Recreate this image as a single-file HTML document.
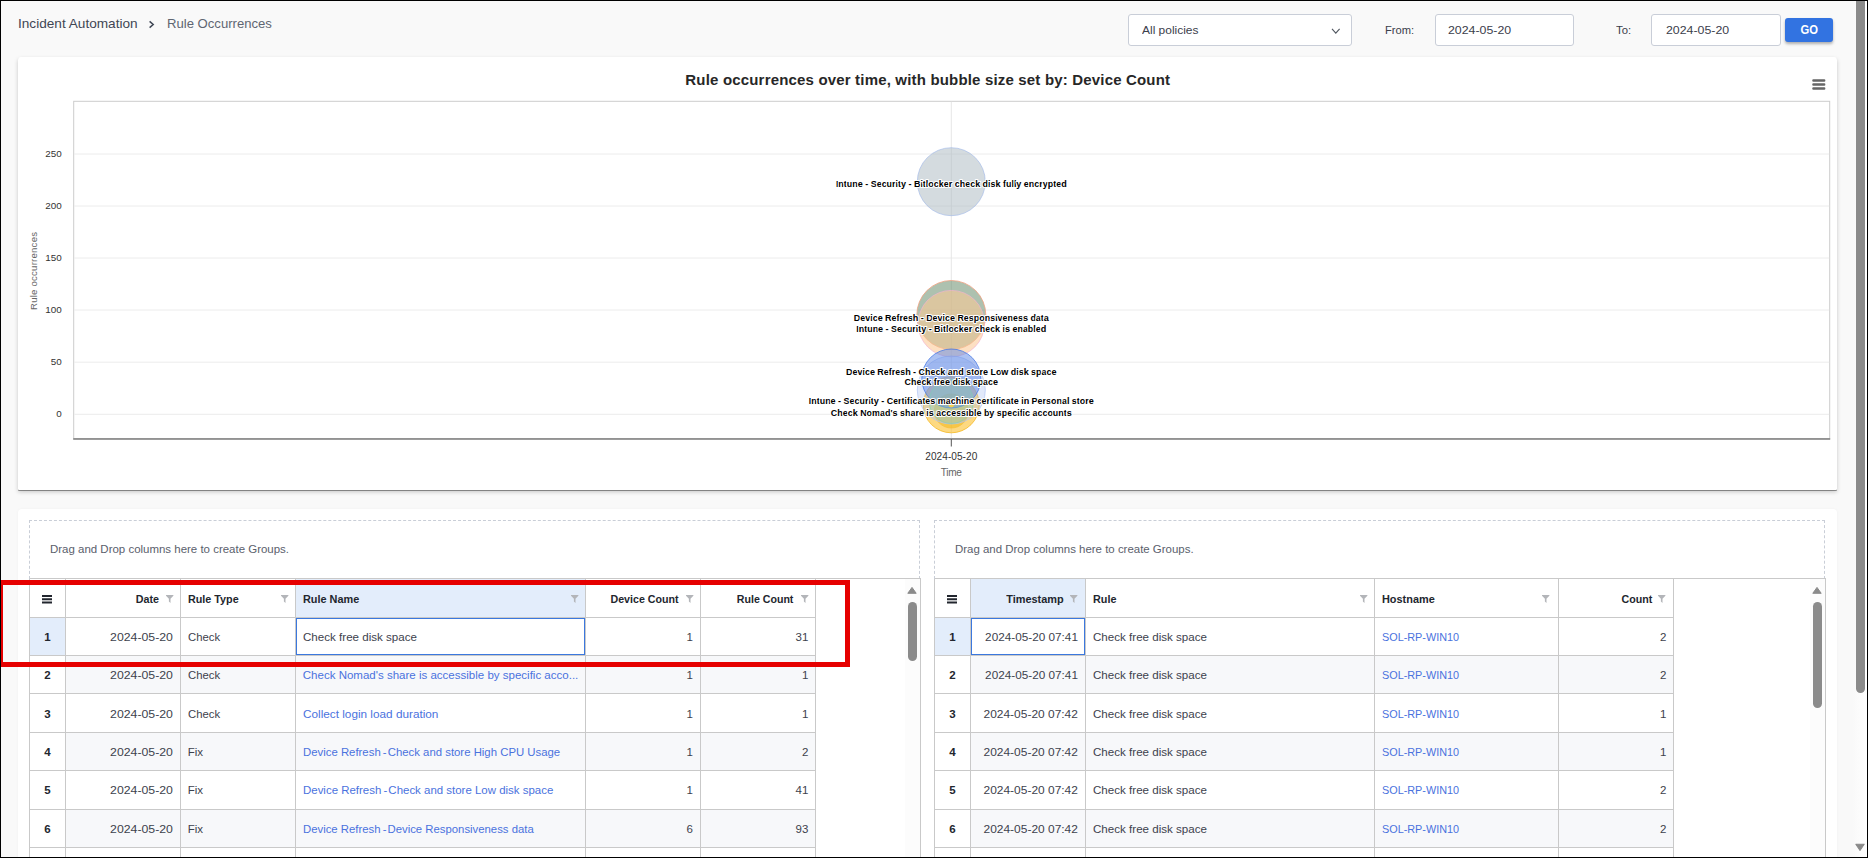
<!DOCTYPE html>
<html lang="en"><head><meta charset="utf-8"><title>Rule Occurrences</title>
<style>
html,body{margin:0;padding:0}
body{width:1868px;height:858px;overflow:hidden;position:relative;background:#f9f9f9;font-family:"Liberation Sans",sans-serif}
.t{position:absolute;white-space:nowrap;line-height:1}
.a{position:absolute}
.box{position:absolute;box-sizing:border-box;background:#fff;border:1px solid #c9ced8;border-radius:3px}
.vl{position:absolute;width:1px;background:#c9c9c9}
.hl{position:absolute;height:1px;background:#c9c9c9}
svg{position:absolute;overflow:visible}
</style></head>
<body>
<div class="a" style="left:18px;top:57px;width:1819px;height:433px;background:#fff;border-radius:3px 3px 1px 1px;box-shadow:0 1px 0.5px rgba(0,0,0,.38),0 2px 4px rgba(0,0,0,.2)"></div>
<div class="a" style="left:18px;top:509px;width:1819px;height:360px;background:#fff;border-radius:4px;box-shadow:0 0 3px rgba(0,0,0,.04)"></div>
<div class="box" style="left:1128.2px;top:14.4px;width:223.5px;height:31.2px"></div>
<svg style="left:1331px;top:27px" width="10" height="8" viewBox="0 0 10 8"><path d="M1 1.8 L4.8 6.2 L8.6 1.8" fill="none" stroke="#50565f" stroke-width="1.1"/></svg>
<div class="box" style="left:1435.3px;top:14.4px;width:138.5px;height:31.2px"></div>
<div class="box" style="left:1651.3px;top:14.4px;width:129.4px;height:31.2px"></div>
<div class="a" style="left:1785.1px;top:18px;width:47.9px;height:23.5px;background:#3273e1;border-radius:3px;box-shadow:0 2px 3px rgba(0,0,0,.3)"></div>
<svg style="left:148px;top:20px" width="8" height="9" viewBox="0 0 8 9"><path d="M1.6 1.4 L5.2 4.5 L1.6 7.6" fill="none" stroke="#3f4654" stroke-width="1.5"/></svg>
<div class="a" style="left:29.1px;top:520px;width:891.0px;height:59px;box-sizing:border-box;border:1px dashed #c9ced7;border-bottom:none"></div>
<div class="a" style="left:65.4px;top:655.56px;width:750.3px;height:38.36px;background:#f7f8fa"></div>
<div class="a" style="left:65.4px;top:732.28px;width:750.3px;height:38.36px;background:#f7f8fa"></div>
<div class="a" style="left:65.4px;top:809.00px;width:750.3px;height:38.36px;background:#f7f8fa"></div>
<div class="a" style="left:295.6px;top:578.5px;width:289.8px;height:38.7px;background:#e3edfb"></div>
<div class="a" style="left:29.6px;top:617.2px;width:35.8px;height:38.36px;background:#e3edfb"></div>
<div class="hl" style="left:29.6px;top:578.0px;width:891.0px"></div>
<div class="vl" style="left:29.1px;top:578.5px;height:300px"></div>
<div class="vl" style="left:920.1px;top:578.5px;height:300px"></div>
<div class="hl" style="left:29.6px;top:616.70px;width:786.1px"></div>
<div class="hl" style="left:29.6px;top:655.06px;width:786.1px"></div>
<div class="hl" style="left:29.6px;top:693.42px;width:786.1px"></div>
<div class="hl" style="left:29.6px;top:731.78px;width:786.1px"></div>
<div class="hl" style="left:29.6px;top:770.14px;width:786.1px"></div>
<div class="hl" style="left:29.6px;top:808.50px;width:786.1px"></div>
<div class="hl" style="left:29.6px;top:846.86px;width:786.1px"></div>
<div class="vl" style="left:64.9px;top:578.5px;height:300px"></div>
<div class="vl" style="left:179.9px;top:578.5px;height:300px"></div>
<div class="vl" style="left:295.1px;top:578.5px;height:300px"></div>
<div class="vl" style="left:584.9px;top:578.5px;height:300px"></div>
<div class="vl" style="left:699.8px;top:578.5px;height:300px"></div>
<div class="vl" style="left:815.2px;top:578.5px;height:300px"></div>
<div class="a" style="left:296.1px;top:618.0px;width:288.8px;height:36.76px;box-sizing:border-box;border:1.5px solid #3b78de;background:#fff"></div>
<div class="a" style="left:904.6px;top:579.0px;width:15.5px;height:300px;background:#fcfcfc"></div>
<svg style="left:907.2px;top:586px" width="10" height="9" viewBox="0 0 10 9"><path d="M0.8 7.3 L5 1.4 L9.2 7.3 Z" fill="#8a8a8a" stroke="#8a8a8a" stroke-width="1" stroke-linejoin="round"/></svg>
<div class="a" style="left:908.1px;top:602px;width:9px;height:58.8px;background:#8b8b8b;border-radius:4.5px"></div>
<div class="a" style="left:934.1px;top:520px;width:891.0px;height:59px;box-sizing:border-box;border:1px dashed #c9ced7;border-bottom:none"></div>
<div class="a" style="left:970.6px;top:655.56px;width:702.7px;height:38.36px;background:#f7f8fa"></div>
<div class="a" style="left:970.6px;top:732.28px;width:702.7px;height:38.36px;background:#f7f8fa"></div>
<div class="a" style="left:970.6px;top:809.00px;width:702.7px;height:38.36px;background:#f7f8fa"></div>
<div class="a" style="left:970.6px;top:578.5px;width:114.9px;height:38.7px;background:#e3edfb"></div>
<div class="a" style="left:934.6px;top:617.2px;width:36.0px;height:38.36px;background:#e3edfb"></div>
<div class="hl" style="left:934.6px;top:578.0px;width:891.0px"></div>
<div class="vl" style="left:934.1px;top:578.5px;height:300px"></div>
<div class="vl" style="left:1825.1px;top:578.5px;height:300px"></div>
<div class="hl" style="left:934.6px;top:616.70px;width:738.7px"></div>
<div class="hl" style="left:934.6px;top:655.06px;width:738.7px"></div>
<div class="hl" style="left:934.6px;top:693.42px;width:738.7px"></div>
<div class="hl" style="left:934.6px;top:731.78px;width:738.7px"></div>
<div class="hl" style="left:934.6px;top:770.14px;width:738.7px"></div>
<div class="hl" style="left:934.6px;top:808.50px;width:738.7px"></div>
<div class="hl" style="left:934.6px;top:846.86px;width:738.7px"></div>
<div class="vl" style="left:970.1px;top:578.5px;height:300px"></div>
<div class="vl" style="left:1085.0px;top:578.5px;height:300px"></div>
<div class="vl" style="left:1374.0px;top:578.5px;height:300px"></div>
<div class="vl" style="left:1558.0px;top:578.5px;height:300px"></div>
<div class="vl" style="left:1672.8px;top:578.5px;height:300px"></div>
<div class="a" style="left:971.1px;top:618.0px;width:113.9px;height:36.76px;box-sizing:border-box;border:1.5px solid #3b78de;background:#fff"></div>
<div class="a" style="left:1809.6px;top:579.0px;width:15.5px;height:300px;background:#fcfcfc"></div>
<svg style="left:1812.2px;top:586px" width="10" height="9" viewBox="0 0 10 9"><path d="M0.8 7.3 L5 1.4 L9.2 7.3 Z" fill="#8a8a8a" stroke="#8a8a8a" stroke-width="1" stroke-linejoin="round"/></svg>
<div class="a" style="left:1813.1px;top:602px;width:9px;height:106.0px;background:#8b8b8b;border-radius:4.5px"></div>
<svg style="left:0;top:0" width="1868" height="520" viewBox="0 0 1868 520" font-family='"Liberation Sans", sans-serif'>
<rect x="73.7" y="101.3" width="1756" height="337.3" fill="none" stroke="#cccccc" stroke-width="1"/>
<path d="M74.2 154H1829.2" stroke="#ececec" stroke-width="1"/>
<path d="M74.2 206H1829.2" stroke="#ececec" stroke-width="1"/>
<path d="M74.2 258H1829.2" stroke="#ececec" stroke-width="1"/>
<path d="M74.2 310H1829.2" stroke="#ececec" stroke-width="1"/>
<path d="M74.2 362.2H1829.2" stroke="#ececec" stroke-width="1"/>
<path d="M74.2 414.3H1829.2" stroke="#ececec" stroke-width="1"/>
<path d="M951.3 101.8V438" stroke="#e6e6e6" stroke-width="1"/>
<circle cx="951.3" cy="181.7" r="34" fill="#a9b7bf" fill-opacity="0.5" stroke="#9db5e8" stroke-opacity="0.6" stroke-width="1"/>
<circle cx="951.3" cy="315" r="34.5" fill="#5c8460" fill-opacity="0.5" stroke="#f0a080" stroke-opacity="0.8" stroke-width="1"/>
<circle cx="951.3" cy="323.6" r="33.2" fill="#fcca96" fill-opacity="0.58" stroke="#f3b4cc" stroke-opacity="0.7" stroke-width="1"/>
<circle cx="951.3" cy="404.8" r="28" fill="#fbc02d" fill-opacity="0.6" stroke="#f5b820" stroke-opacity="0.8" stroke-width="1"/>
<circle cx="951.3" cy="411" r="17" fill="#f0b000" fill-opacity="0.45" stroke="#f5c040" stroke-opacity="0.8" stroke-width="1"/>
<circle cx="951.3" cy="390" r="34" fill="#a8c0f0" fill-opacity="0.35" stroke="#b0c4f4" stroke-opacity="0.7" stroke-width="1"/>
<circle cx="951.3" cy="378.5" r="29.5" fill="#5b86e5" fill-opacity="0.5" stroke="#4a7ce6" stroke-opacity="0.8" stroke-width="1"/>
<circle cx="951.3" cy="401.5" r="22" fill="#7fd0c0" fill-opacity="0.3" stroke="#7cd0b8" stroke-opacity="0.6" stroke-width="1"/>
<circle cx="951.3" cy="404.5" r="2.6" fill="#fbd34a" fill-opacity="0.9" stroke="#fbd34a" stroke-opacity="0.6" stroke-width="1"/>
<path d="M73.2 438.9H1830.2" stroke="#7d7d7d" stroke-width="1.5"/>
<path d="M951.3 439V446.5" stroke="#555" stroke-width="1"/>
<text x="61.8" y="156.8" text-anchor="end" font-size="9.9" fill="#333">250</text>
<text x="61.8" y="208.8" text-anchor="end" font-size="9.9" fill="#333">200</text>
<text x="61.8" y="260.8" text-anchor="end" font-size="9.9" fill="#333">150</text>
<text x="61.8" y="312.8" text-anchor="end" font-size="9.9" fill="#333">100</text>
<text x="61.8" y="365.0" text-anchor="end" font-size="9.9" fill="#333">50</text>
<text x="61.8" y="417.1" text-anchor="end" font-size="9.9" fill="#333">0</text>
<text transform="translate(36.7 271) rotate(-90)" text-anchor="middle" font-size="9.6" fill="#666" textLength="78" lengthAdjust="spacing">Rule occurrences</text>
<text x="951.3" y="460" text-anchor="middle" font-size="10.1" fill="#333" textLength="52" lengthAdjust="spacing">2024-05-20</text>
<text x="951.3" y="475.7" text-anchor="middle" font-size="10.1" fill="#666" textLength="21.2" lengthAdjust="spacing">Time</text>
<text x="927.7" y="85" text-anchor="middle" font-size="15" font-weight="700" fill="#272727" textLength="484.7" lengthAdjust="spacing">Rule occurrences over time, with bubble size set by: Device Count</text>
<text x="951.3" y="186.9" text-anchor="middle" font-size="9.05" font-weight="700" fill="#000" stroke="#fff" stroke-width="2" stroke-linejoin="round" paint-order="stroke" textLength="230.8" lengthAdjust="spacing">Intune - Security - Bitlocker check disk fully encrypted</text>
<text x="951.3" y="321" text-anchor="middle" font-size="9.05" font-weight="700" fill="#000" stroke="#fff" stroke-width="2" stroke-linejoin="round" paint-order="stroke" textLength="195" lengthAdjust="spacing">Device Refresh - Device Responsiveness data</text>
<text x="951.3" y="331.8" text-anchor="middle" font-size="9.05" font-weight="700" fill="#000" stroke="#fff" stroke-width="2" stroke-linejoin="round" paint-order="stroke" textLength="190" lengthAdjust="spacing">Intune - Security - Bitlocker check is enabled</text>
<text x="951.3" y="374.8" text-anchor="middle" font-size="9.05" font-weight="700" fill="#000" stroke="#fff" stroke-width="2" stroke-linejoin="round" paint-order="stroke" textLength="210.5" lengthAdjust="spacing">Device Refresh - Check and store Low disk space</text>
<text x="951.3" y="384.9" text-anchor="middle" font-size="9.05" font-weight="700" fill="#000" stroke="#fff" stroke-width="2" stroke-linejoin="round" paint-order="stroke" textLength="93.5" lengthAdjust="spacing">Check free disk space</text>
<text x="951.3" y="403.8" text-anchor="middle" font-size="9.05" font-weight="700" fill="#000" stroke="#fff" stroke-width="2" stroke-linejoin="round" paint-order="stroke" textLength="285" lengthAdjust="spacing">Intune - Security - Certificates machine certificate in Personal store</text>
<text x="951.3" y="415.7" text-anchor="middle" font-size="9.05" font-weight="700" fill="#000" stroke="#fff" stroke-width="2" stroke-linejoin="round" paint-order="stroke" textLength="241" lengthAdjust="spacing">Check Nomad's share is accessible by specific accounts</text>
<text x="1809.2" y="33.6" text-anchor="middle" font-size="12.7" font-weight="700" fill="#fff" textLength="17.5" lengthAdjust="spacingAndGlyphs">GO</text>
<path d="M1813.4 80.5H1824.2M1813.4 84.5H1824.2M1813.4 88.5H1824.2" stroke="#666" stroke-width="2.4" stroke-linecap="round"/>
</svg>
<svg style="left:42.3px;top:594.8px" width="10" height="8.4" viewBox="0 0 10 8.4"><path d="M0 0.9H10M0 4.2H10M0 7.5H10" stroke="#22262e" stroke-width="2" fill="none"/></svg>
<svg style="left:947.4px;top:594.8px" width="10" height="8.4" viewBox="0 0 10 8.4"><path d="M0 0.9H10M0 4.2H10M0 7.5H10" stroke="#22262e" stroke-width="2" fill="none"/></svg>
<svg style="left:166.0px;top:595.0px" width="7.4" height="7.9" viewBox="0 0 74 84" preserveAspectRatio="none"><path d="M0 0H74V8L45 40V84L29 70V40L0 8Z" fill="#b3b5b9"/></svg>
<svg style="left:280.8px;top:595.0px" width="7.4" height="7.9" viewBox="0 0 74 84" preserveAspectRatio="none"><path d="M0 0H74V8L45 40V84L29 70V40L0 8Z" fill="#b3b5b9"/></svg>
<svg style="left:570.5px;top:595.0px" width="7.4" height="7.9" viewBox="0 0 74 84" preserveAspectRatio="none"><path d="M0 0H74V8L45 40V84L29 70V40L0 8Z" fill="#b3b5b9"/></svg>
<svg style="left:685.9px;top:595.0px" width="7.4" height="7.9" viewBox="0 0 74 84" preserveAspectRatio="none"><path d="M0 0H74V8L45 40V84L29 70V40L0 8Z" fill="#b3b5b9"/></svg>
<svg style="left:800.6px;top:595.0px" width="7.4" height="7.9" viewBox="0 0 74 84" preserveAspectRatio="none"><path d="M0 0H74V8L45 40V84L29 70V40L0 8Z" fill="#b3b5b9"/></svg>
<svg style="left:1070.4px;top:595.0px" width="7.4" height="7.9" viewBox="0 0 74 84" preserveAspectRatio="none"><path d="M0 0H74V8L45 40V84L29 70V40L0 8Z" fill="#b3b5b9"/></svg>
<svg style="left:1360.0px;top:595.0px" width="7.4" height="7.9" viewBox="0 0 74 84" preserveAspectRatio="none"><path d="M0 0H74V8L45 40V84L29 70V40L0 8Z" fill="#b3b5b9"/></svg>
<svg style="left:1542.2px;top:595.0px" width="7.4" height="7.9" viewBox="0 0 74 84" preserveAspectRatio="none"><path d="M0 0H74V8L45 40V84L29 70V40L0 8Z" fill="#b3b5b9"/></svg>
<svg style="left:1658.3px;top:595.0px" width="7.4" height="7.9" viewBox="0 0 74 84" preserveAspectRatio="none"><path d="M0 0H74V8L45 40V84L29 70V40L0 8Z" fill="#b3b5b9"/></svg>
<span class="t" style="top:17px;font-size:13.44px;font-weight:400;color:#3f4654;left:17.80px;transform-origin:0 50%;transform:scaleX(1.0133);">Incident Automation</span>
<span class="t" style="top:17px;font-size:13.44px;font-weight:400;color:#5f6672;left:166.70px;transform-origin:0 50%;transform:scaleX(0.9754);">Rule Occurrences</span>
<span class="t" style="top:25px;font-size:11.52px;font-weight:400;color:#3b404b;left:1142.30px;transform-origin:0 50%;transform:scaleX(1.0385);">All policies</span>
<span class="t" style="top:25px;font-size:11.52px;font-weight:400;color:#3b404b;left:1384.60px;transform-origin:0 50%;transform:scaleX(0.9675);">From:</span>
<span class="t" style="top:25px;font-size:11.52px;font-weight:400;color:#3b404b;left:1448.30px;transform-origin:0 50%;transform:scaleX(1.0712);">2024-05-20</span>
<span class="t" style="top:25px;font-size:11.52px;font-weight:400;color:#3b404b;left:1616.20px;transform-origin:0 50%;transform:scaleX(0.9821);">To:</span>
<span class="t" style="top:25px;font-size:11.52px;font-weight:400;color:#3b404b;left:1665.50px;transform-origin:0 50%;transform:scaleX(1.0712);">2024-05-20</span>
<span class="t" style="top:544px;font-size:11.52px;font-weight:400;color:#5a606c;left:50.10px;transform-origin:0 50%;transform:scaleX(0.9957);">Drag and Drop columns here to create Groups.</span>
<span class="t" style="top:544px;font-size:11.52px;font-weight:400;color:#5a606c;left:955.20px;transform-origin:0 50%;transform:scaleX(0.9940);">Drag and Drop columns here to create Groups.</span>
<span class="t" style="top:594px;font-size:11.52px;font-weight:700;color:#22262e;right:1709.20px;transform-origin:100% 50%;transform:scaleX(0.9292);">Date</span>
<span class="t" style="top:594px;font-size:11.52px;font-weight:700;color:#22262e;left:187.70px;transform-origin:0 50%;transform:scaleX(0.9356);">Rule Type</span>
<span class="t" style="top:594px;font-size:11.52px;font-weight:700;color:#22262e;left:302.70px;transform-origin:0 50%;transform:scaleX(0.9457);">Rule Name</span>
<span class="t" style="top:594px;font-size:11.52px;font-weight:700;color:#22262e;right:1189.10px;transform-origin:100% 50%;transform:scaleX(0.9254);">Device Count</span>
<span class="t" style="top:594px;font-size:11.52px;font-weight:700;color:#22262e;right:1074.20px;transform-origin:100% 50%;transform:scaleX(0.9215);">Rule Count</span>
<span class="t" style="top:594px;font-size:11.52px;font-weight:700;color:#22262e;right:804.00px;transform-origin:100% 50%;transform:scaleX(0.9473);">Timestamp</span>
<span class="t" style="top:594px;font-size:11.52px;font-weight:700;color:#22262e;left:1092.50px;transform-origin:0 50%;transform:scaleX(0.9372);">Rule</span>
<span class="t" style="top:594px;font-size:11.52px;font-weight:700;color:#22262e;left:1382.30px;transform-origin:0 50%;transform:scaleX(0.9464);">Hostname</span>
<span class="t" style="top:594px;font-size:11.52px;font-weight:700;color:#22262e;right:216.20px;transform-origin:100% 50%;transform:scaleX(0.9259);">Count</span>
<span class="t" style="top:632px;font-size:11.52px;font-weight:700;color:#22262e;left:47.50px;transform:translateX(-50%);">1</span>
<span class="t" style="top:632px;font-size:11.52px;font-weight:400;color:#3d424d;right:1694.70px;transform-origin:100% 50%;transform:scaleX(1.0661);">2024-05-20</span>
<span class="t" style="top:632px;font-size:11.52px;font-weight:400;color:#3d424d;left:187.70px;transform-origin:0 50%;transform:scaleX(0.9830);">Check</span>
<span class="t" style="top:632px;font-size:11.52px;font-weight:400;color:#3d424d;left:302.80px;transform-origin:0 50%;transform:scaleX(1.0062);">Check free disk space</span>
<span class="t" style="top:632px;font-size:11.52px;font-weight:400;color:#3d424d;right:1175.10px;transform-origin:100% 50%;">1</span>
<span class="t" style="top:632px;font-size:11.52px;font-weight:400;color:#3d424d;right:1059.70px;transform-origin:100% 50%;">31</span>
<span class="t" style="top:670px;font-size:11.52px;font-weight:700;color:#22262e;left:47.50px;transform:translateX(-50%);">2</span>
<span class="t" style="top:670px;font-size:11.52px;font-weight:400;color:#3d424d;right:1694.70px;transform-origin:100% 50%;transform:scaleX(1.0661);">2024-05-20</span>
<span class="t" style="top:670px;font-size:11.52px;font-weight:400;color:#3d424d;left:187.70px;transform-origin:0 50%;transform:scaleX(0.9830);">Check</span>
<span class="t" style="top:670px;font-size:11.52px;font-weight:400;color:#4a72de;left:302.80px;transform-origin:0 50%;">Check Nomad's share is accessible by specific acco...</span>
<span class="t" style="top:670px;font-size:11.52px;font-weight:400;color:#3d424d;right:1175.10px;transform-origin:100% 50%;">1</span>
<span class="t" style="top:670px;font-size:11.52px;font-weight:400;color:#3d424d;right:1059.70px;transform-origin:100% 50%;">1</span>
<span class="t" style="top:709px;font-size:11.52px;font-weight:700;color:#22262e;left:47.50px;transform:translateX(-50%);">3</span>
<span class="t" style="top:709px;font-size:11.52px;font-weight:400;color:#3d424d;right:1694.70px;transform-origin:100% 50%;transform:scaleX(1.0661);">2024-05-20</span>
<span class="t" style="top:709px;font-size:11.52px;font-weight:400;color:#3d424d;left:187.70px;transform-origin:0 50%;transform:scaleX(0.9830);">Check</span>
<span class="t" style="top:709px;font-size:11.52px;font-weight:400;color:#4a72de;left:302.80px;transform-origin:0 50%;transform:scaleX(1.0218);">Collect login load duration</span>
<span class="t" style="top:709px;font-size:11.52px;font-weight:400;color:#3d424d;right:1175.10px;transform-origin:100% 50%;">1</span>
<span class="t" style="top:709px;font-size:11.52px;font-weight:400;color:#3d424d;right:1059.70px;transform-origin:100% 50%;">1</span>
<span class="t" style="top:747px;font-size:11.52px;font-weight:700;color:#22262e;left:47.50px;transform:translateX(-50%);">4</span>
<span class="t" style="top:747px;font-size:11.52px;font-weight:400;color:#3d424d;right:1694.70px;transform-origin:100% 50%;transform:scaleX(1.0661);">2024-05-20</span>
<span class="t" style="top:747px;font-size:11.52px;font-weight:400;color:#3d424d;left:187.70px;transform-origin:0 50%;">Fix</span>
<span class="t" style="top:747px;font-size:11.52px;font-weight:400;color:#4a72de;left:302.80px;transform-origin:0 50%;transform:scaleX(0.9870);">Device Refresh<span style="letter-spacing:-1.05px"> - </span>Check and store High CPU Usage</span>
<span class="t" style="top:747px;font-size:11.52px;font-weight:400;color:#3d424d;right:1175.10px;transform-origin:100% 50%;">1</span>
<span class="t" style="top:747px;font-size:11.52px;font-weight:400;color:#3d424d;right:1059.70px;transform-origin:100% 50%;">2</span>
<span class="t" style="top:785px;font-size:11.52px;font-weight:700;color:#22262e;left:47.50px;transform:translateX(-50%);">5</span>
<span class="t" style="top:785px;font-size:11.52px;font-weight:400;color:#3d424d;right:1694.70px;transform-origin:100% 50%;transform:scaleX(1.0661);">2024-05-20</span>
<span class="t" style="top:785px;font-size:11.52px;font-weight:400;color:#3d424d;left:187.70px;transform-origin:0 50%;">Fix</span>
<span class="t" style="top:785px;font-size:11.52px;font-weight:400;color:#4a72de;left:302.80px;transform-origin:0 50%;transform:scaleX(0.9947);">Device Refresh<span style="letter-spacing:-1.05px"> - </span>Check and store Low disk space</span>
<span class="t" style="top:785px;font-size:11.52px;font-weight:400;color:#3d424d;right:1175.10px;transform-origin:100% 50%;">1</span>
<span class="t" style="top:785px;font-size:11.52px;font-weight:400;color:#3d424d;right:1059.70px;transform-origin:100% 50%;">41</span>
<span class="t" style="top:824px;font-size:11.52px;font-weight:700;color:#22262e;left:47.50px;transform:translateX(-50%);">6</span>
<span class="t" style="top:824px;font-size:11.52px;font-weight:400;color:#3d424d;right:1694.70px;transform-origin:100% 50%;transform:scaleX(1.0661);">2024-05-20</span>
<span class="t" style="top:824px;font-size:11.52px;font-weight:400;color:#3d424d;left:187.70px;transform-origin:0 50%;">Fix</span>
<span class="t" style="top:824px;font-size:11.52px;font-weight:400;color:#4a72de;left:302.80px;transform-origin:0 50%;transform:scaleX(0.9845);">Device Refresh<span style="letter-spacing:-1.05px"> - </span>Device Responsiveness data</span>
<span class="t" style="top:824px;font-size:11.52px;font-weight:400;color:#3d424d;right:1175.10px;transform-origin:100% 50%;">6</span>
<span class="t" style="top:824px;font-size:11.52px;font-weight:400;color:#3d424d;right:1059.70px;transform-origin:100% 50%;">93</span>
<span class="t" style="top:632px;font-size:11.52px;font-weight:700;color:#22262e;left:952.40px;transform:translateX(-50%);">1</span>
<span class="t" style="top:632px;font-size:11.52px;font-weight:400;color:#3d424d;right:789.90px;transform-origin:100% 50%;transform:scaleX(1.0207);">2024-05-20 07:41</span>
<span class="t" style="top:632px;font-size:11.52px;font-weight:400;color:#3d424d;left:1092.50px;transform-origin:0 50%;transform:scaleX(1.0062);">Check free disk space</span>
<span class="t" style="top:632px;font-size:11.52px;font-weight:400;color:#4a72de;left:1382.30px;transform-origin:0 50%;transform:scaleX(0.9401);">SOL-RP-WIN10</span>
<span class="t" style="top:632px;font-size:11.52px;font-weight:400;color:#3d424d;right:201.50px;transform-origin:100% 50%;">2</span>
<span class="t" style="top:670px;font-size:11.52px;font-weight:700;color:#22262e;left:952.40px;transform:translateX(-50%);">2</span>
<span class="t" style="top:670px;font-size:11.52px;font-weight:400;color:#3d424d;right:789.90px;transform-origin:100% 50%;transform:scaleX(1.0207);">2024-05-20 07:41</span>
<span class="t" style="top:670px;font-size:11.52px;font-weight:400;color:#3d424d;left:1092.50px;transform-origin:0 50%;transform:scaleX(1.0062);">Check free disk space</span>
<span class="t" style="top:670px;font-size:11.52px;font-weight:400;color:#4a72de;left:1382.30px;transform-origin:0 50%;transform:scaleX(0.9401);">SOL-RP-WIN10</span>
<span class="t" style="top:670px;font-size:11.52px;font-weight:400;color:#3d424d;right:201.50px;transform-origin:100% 50%;">2</span>
<span class="t" style="top:709px;font-size:11.52px;font-weight:700;color:#22262e;left:952.40px;transform:translateX(-50%);">3</span>
<span class="t" style="top:709px;font-size:11.52px;font-weight:400;color:#3d424d;right:789.90px;transform-origin:100% 50%;transform:scaleX(1.0383);">2024-05-20 07:42</span>
<span class="t" style="top:709px;font-size:11.52px;font-weight:400;color:#3d424d;left:1092.50px;transform-origin:0 50%;transform:scaleX(1.0062);">Check free disk space</span>
<span class="t" style="top:709px;font-size:11.52px;font-weight:400;color:#4a72de;left:1382.30px;transform-origin:0 50%;transform:scaleX(0.9401);">SOL-RP-WIN10</span>
<span class="t" style="top:709px;font-size:11.52px;font-weight:400;color:#3d424d;right:201.50px;transform-origin:100% 50%;">1</span>
<span class="t" style="top:747px;font-size:11.52px;font-weight:700;color:#22262e;left:952.40px;transform:translateX(-50%);">4</span>
<span class="t" style="top:747px;font-size:11.52px;font-weight:400;color:#3d424d;right:789.90px;transform-origin:100% 50%;transform:scaleX(1.0383);">2024-05-20 07:42</span>
<span class="t" style="top:747px;font-size:11.52px;font-weight:400;color:#3d424d;left:1092.50px;transform-origin:0 50%;transform:scaleX(1.0062);">Check free disk space</span>
<span class="t" style="top:747px;font-size:11.52px;font-weight:400;color:#4a72de;left:1382.30px;transform-origin:0 50%;transform:scaleX(0.9401);">SOL-RP-WIN10</span>
<span class="t" style="top:747px;font-size:11.52px;font-weight:400;color:#3d424d;right:201.50px;transform-origin:100% 50%;">1</span>
<span class="t" style="top:785px;font-size:11.52px;font-weight:700;color:#22262e;left:952.40px;transform:translateX(-50%);">5</span>
<span class="t" style="top:785px;font-size:11.52px;font-weight:400;color:#3d424d;right:789.90px;transform-origin:100% 50%;transform:scaleX(1.0383);">2024-05-20 07:42</span>
<span class="t" style="top:785px;font-size:11.52px;font-weight:400;color:#3d424d;left:1092.50px;transform-origin:0 50%;transform:scaleX(1.0062);">Check free disk space</span>
<span class="t" style="top:785px;font-size:11.52px;font-weight:400;color:#4a72de;left:1382.30px;transform-origin:0 50%;transform:scaleX(0.9401);">SOL-RP-WIN10</span>
<span class="t" style="top:785px;font-size:11.52px;font-weight:400;color:#3d424d;right:201.50px;transform-origin:100% 50%;">2</span>
<span class="t" style="top:824px;font-size:11.52px;font-weight:700;color:#22262e;left:952.40px;transform:translateX(-50%);">6</span>
<span class="t" style="top:824px;font-size:11.52px;font-weight:400;color:#3d424d;right:789.90px;transform-origin:100% 50%;transform:scaleX(1.0383);">2024-05-20 07:42</span>
<span class="t" style="top:824px;font-size:11.52px;font-weight:400;color:#3d424d;left:1092.50px;transform-origin:0 50%;transform:scaleX(1.0062);">Check free disk space</span>
<span class="t" style="top:824px;font-size:11.52px;font-weight:400;color:#4a72de;left:1382.30px;transform-origin:0 50%;transform:scaleX(0.9401);">SOL-RP-WIN10</span>
<span class="t" style="top:824px;font-size:11.52px;font-weight:400;color:#3d424d;right:201.50px;transform-origin:100% 50%;">2</span>
<div class="a" style="left:1px;top:579.9px;width:848.8px;height:86.9px;box-sizing:border-box;border:5px solid #e60000;border-left-width:2px"></div>
<div class="a" style="left:1853px;top:0;width:15px;height:858px;background:linear-gradient(90deg,#f9f9f9,#fbfbfb 4px,#fdfdfd 11px,#fff 13px)"></div>
<div class="a" style="left:1856.2px;top:-6px;width:8.9px;height:698.5px;background:#8b8b8b;border-radius:4.4px"></div>
<svg style="left:1855.3px;top:842.6px" width="10" height="8.6" viewBox="0 0 10 8" preserveAspectRatio="none"><path d="M0.8 1.2 L5 7 L9.2 1.2 Z" fill="#8a8a8a" stroke="#8a8a8a" stroke-width="1" stroke-linejoin="round"/></svg>
<div class="a" style="left:0;top:0;width:1868px;height:1px;background:#000"></div>
<div class="a" style="left:0;top:0;width:1px;height:858px;background:#000"></div>
<div class="a" style="left:1867px;top:0;width:1px;height:858px;background:#000"></div>
<div class="a" style="left:0;top:856.8px;width:1868px;height:1.2px;background:#000"></div>
</body></html>
